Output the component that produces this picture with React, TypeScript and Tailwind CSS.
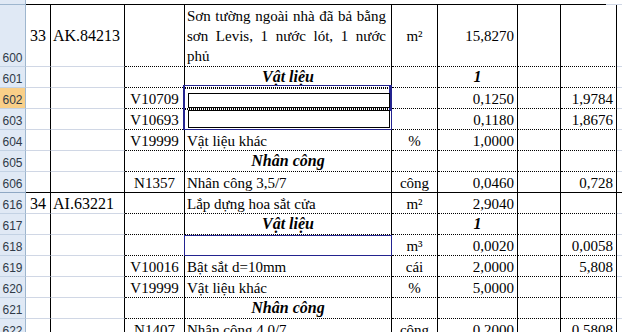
import React from 'react';

type C = {
  t?: React.ReactNode;
  al?: 'l' | 'c' | 'r';
  bi?: boolean;
  topDot?: boolean;
  block?: boolean;
};

const WIDTHS = ['w-[25px]', 'w-[74px]', 'w-[60px]', 'w-[207px]', 'w-[46px]', 'w-[80px]', 'w-[43px]', 'w-[56px]'];

function Hdr({ n, hl, solid }: { n: string; hl?: boolean; solid?: boolean }) {
  return (
    <div
      className={`w-[26px] shrink-0 flex items-end justify-center pb-[1px] border-r border-r-[#9eb6ce] border-b ${
        solid ? 'border-b-[#8fa8c4]' : 'border-b-[#c3d2e4]'
      } ${hl ? 'bg-[#f9cf88]' : 'bg-[#e0e9f5]'} font-['Liberation_Sans',sans-serif] text-[12px] leading-[14px] text-[#2f3a48]`}
    >
      {n}
    </div>
  );
}

function Cell({ i, c, solid, center }: { i: number; c: C; solid?: boolean; center?: boolean }) {
  const bb = solid
    ? 'border-b-black'
    : i < 2
    ? 'border-b-[#d0d7e5]'
    : 'border-b-black [border-bottom-style:dotted]';
  const just =
    c.al === 'c' ? 'justify-center' : c.al === 'r' ? 'justify-end pr-[3px]' : 'justify-start pl-[2px]';
  const align = c.block ? 'items-end' : center ? 'items-center' : 'items-end';
  const font = c.bi
    ? 'text-[16px] font-bold italic leading-[18px] pb-[1px]'
    : i < 2
    ? 'text-[16px] leading-[18px]'
    : 'text-[15px] leading-[18px]';
  return (
    <div
      className={`${WIDTHS[i]} shrink-0 flex ${align} ${just} ${font} border-r border-r-black border-b ${bb} ${
        c.topDot ? 'border-t border-t-black [border-top-style:dotted]' : ''
      } whitespace-nowrap overflow-visible text-black`}
    >
      {c.t}
    </div>
  );
}

function Row({
  n,
  h,
  hl,
  solid,
  center,
  cells,
}: {
  n: string;
  h: string;
  hl?: boolean;
  solid?: boolean;
  center?: boolean;
  cells: C[];
}) {
  return (
    <div className={`flex shrink-0 ${h}`}>
      <Hdr n={n} hl={hl} solid={solid} />
      {cells.map((c, i) => (
        <Cell key={i} i={i} c={c} solid={solid} center={center} />
      ))}
      <div className={`flex-1 border-b ${solid ? 'border-b-black' : 'border-b-[#d0d7e5]'}`} />
    </div>
  );
}

const E: C = {};

export default function App() {
  const desc600 = (
    <div className="w-full pr-[5px] pb-0 leading-[20px] whitespace-normal">
      <div className="text-justify [text-align-last:justify]">Sơn tường ngoài nhà đã bả bằng</div>
      <div className="text-justify [text-align-last:justify]">sơn Levis, 1 nước lót, 1 nước</div>
      <div>phủ</div>
    </div>
  );

  return (
    <div className="relative w-[622px] h-[332px] overflow-hidden bg-white font-['Liberation_Serif',serif]">
      <div className="flex flex-col">
        {/* stub of previous row */}
        <div className="flex shrink-0 h-[5px]">
          <div className="w-[26px] shrink-0 bg-[#e0e9f5] border-r border-r-[#9eb6ce] border-b border-b-[#9eb6ce]" />
          <div className="w-[580px] shrink-0 border-b border-b-black" />
          <div className="flex-1 border-b border-b-[#d0d7e5]" />
        </div>

        <Row
          n="600"
          h="h-[62px]"
          center
          cells={[
            { t: '33', al: 'c' },
            { t: 'AK.84213' },
            E,
            { t: desc600, block: true },
            { t: 'm²', al: 'c' },
            { t: '15,8270', al: 'r' },
            E,
            E,
          ]}
        />
        <Row
          n="601"
          h="h-[21px]"
          cells={[E, E, E, { t: 'Vật liệu', al: 'c', bi: true }, E, { t: '1', al: 'c', bi: true }, E, E]}
        />
        <Row
          n="602"
          h="h-[21px]"
          hl
          cells={[
            E,
            E,
            { t: 'V10709', al: 'c' },
            { topDot: true },
            E,
            { t: '0,1250', al: 'r' },
            E,
            { t: '1,9784', al: 'r' },
          ]}
        />
        <Row
          n="603"
          h="h-[21px]"
          cells={[
            E,
            E,
            { t: 'V10693', al: 'c' },
            { topDot: true },
            E,
            { t: '0,1180', al: 'r' },
            E,
            { t: '1,8676', al: 'r' },
          ]}
        />
        <Row
          n="604"
          h="h-[21px]"
          cells={[
            E,
            E,
            { t: 'V19999', al: 'c' },
            { t: 'Vật liệu khác' },
            { t: '%', al: 'c' },
            { t: '1,0000', al: 'r' },
            E,
            E,
          ]}
        />
        <Row n="605" h="h-[21px]" cells={[E, E, E, { t: 'Nhân công', al: 'c', bi: true }, E, E, E, E]} />
        <Row
          n="606"
          h="h-[21px]"
          solid
          cells={[
            E,
            E,
            { t: 'N1357', al: 'c' },
            { t: 'Nhân công 3,5/7' },
            { t: 'công', al: 'c' },
            { t: '0,0460', al: 'r' },
            E,
            { t: '0,728', al: 'r' },
          ]}
        />
        <Row
          n="616"
          h="h-[21px]"
          cells={[
            { t: '34', al: 'c' },
            { t: 'AI.63221' },
            E,
            { t: 'Lắp dựng hoa sắt cửa' },
            { t: 'm²', al: 'c' },
            { t: '2,9040', al: 'r' },
            E,
            E,
          ]}
        />
        <Row
          n="617"
          h="h-[21px]"
          cells={[E, E, E, { t: 'Vật liệu', al: 'c', bi: true }, E, { t: '1', al: 'c', bi: true }, E, E]}
        />
        <Row
          n="618"
          h="h-[21px]"
          cells={[
            E,
            E,
            E,
            E,
            { t: 'm³', al: 'c' },
            { t: '0,0020', al: 'r' },
            E,
            { t: '0,0058', al: 'r' },
          ]}
        />
        <Row
          n="619"
          h="h-[21px]"
          cells={[
            E,
            E,
            { t: 'V10016', al: 'c' },
            { t: 'Bật sắt d=10mm' },
            { t: 'cái', al: 'c' },
            { t: '2,0000', al: 'r' },
            E,
            { t: '5,808', al: 'r' },
          ]}
        />
        <Row
          n="620"
          h="h-[21px]"
          cells={[
            E,
            E,
            { t: 'V19999', al: 'c' },
            { t: 'Vật liệu khác' },
            { t: '%', al: 'c' },
            { t: '5,0000', al: 'r' },
            E,
            E,
          ]}
        />
        <Row n="621" h="h-[21px]" cells={[E, E, E, { t: 'Nhân công', al: 'c', bi: true }, E, E, E, E]} />
        <Row
          n="622"
          h="h-[21px]"
          cells={[
            E,
            E,
            { t: 'N1407', al: 'c' },
            { t: 'Nhân công 4,0/7' },
            { t: 'công', al: 'c' },
            { t: '0,2000', al: 'r' },
            E,
            { t: '0,5808', al: 'r' },
          ]}
        />
      </div>

      {/* selection overlays */}
      <div className="absolute left-[183px] top-[85px] w-[209px] h-[45px] border border-[#23238f] border-l-2" />
      <div className="absolute left-[389px] top-[86px] w-[3px] h-[25px] bg-[#23238f]" />
      <div className="absolute left-[188px] top-[93px] w-[202px] h-[15px] border border-black" />
      <div className="absolute left-[188px] top-[110px] w-[202px] h-[18px] border border-black" />
      <div className="absolute left-[184px] top-[235px] w-[208px] h-[21px] border border-[#23238f]" />
    </div>
  );
}
